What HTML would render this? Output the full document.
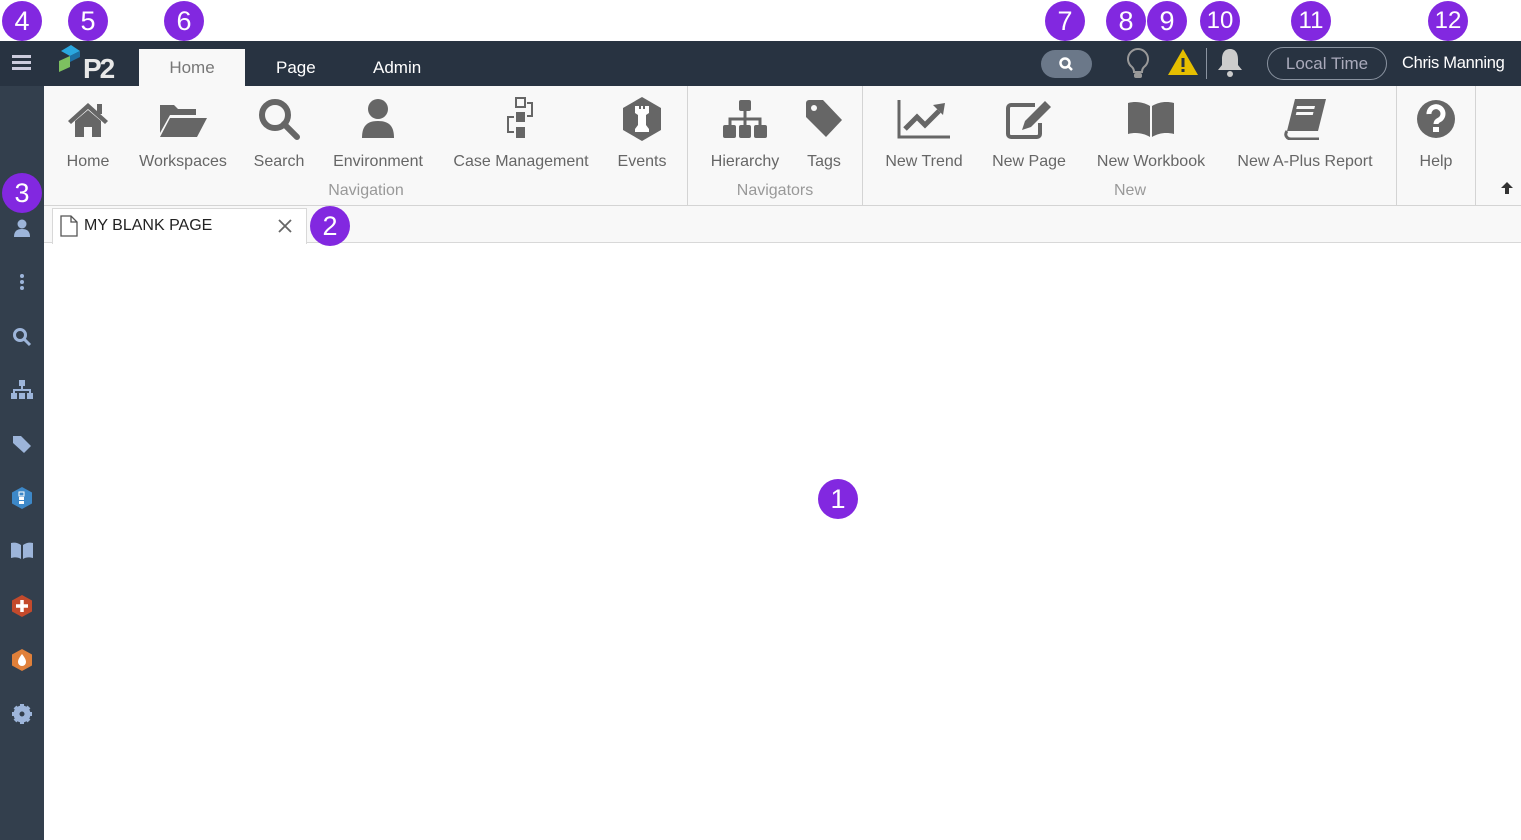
<!DOCTYPE html>
<html><head><meta charset="utf-8"><style>
*{margin:0;padding:0;box-sizing:border-box}
body{width:1521px;height:840px;position:relative;background:#fff;font-family:"Liberation Sans",sans-serif;overflow:hidden}
.a{position:absolute}
.top{left:0;top:41px;width:1521px;height:45px;background:#283341}
.side{left:0;top:86px;width:44px;height:754px;background:#333f4d}
.rib{left:44px;top:86px;width:1477px;height:120px;background:#f8f8f8;border-bottom:1px solid #d4d4d4}
.tabs{left:44px;top:206px;width:1477px;height:37px;background:#f8f8f8;border-bottom:1px solid #d8d8d8}
.lbl{font-size:16px;color:#666;transform:translateX(-50%);white-space:nowrap;top:153px}
.grp{font-size:16px;color:#999;transform:translateX(-50%);white-space:nowrap;top:182px}
.sep{top:86px;width:1px;height:119px;background:#d4d4d4}
.ic{transform:translate(-50%,-50%);top:119px}
.c{width:40px;height:40px;border-radius:50%;background:#8228e0;color:#fff;font-size:27px;text-align:center;line-height:40px;transform:translate(-50%,-50%)}
.si{left:22px;transform:translate(-50%,-50%)}
</style></head><body>
<div class="a top"></div>
<div class="a side"></div>
<div class="a" style="left:12px;top:55px;width:19px;height:3px;background:#ccd;box-shadow:0 6px 0 #ccd,0 12px 0 #ccd"></div>
<svg class="a" style="left:58px;top:44px" width="64" height="36" viewBox="0 0 64 36"><polygon points="3,7 13,1 22,7 12,12" fill="#2aa7df"/><polygon points="1,17 12,12 12,23 1,28" fill="#7dc060"/><polygon points="12,12 22,7 22,13 12,18" fill="#1d6fa3"/><text x="25" y="34" font-family="Liberation Sans" font-weight="bold" font-size="28" fill="#e8e8e8" letter-spacing="-2">P2</text></svg>
<div class="a" style="left:139px;top:49px;width:106px;height:37px;background:#f8f8f8;color:#777;font-size:17px;text-align:center;line-height:38px">Home</div>
<div class="a" style="left:276px;top:58px;color:#fff;font-size:17px">Page</div>
<div class="a" style="left:373px;top:58px;color:#fff;font-size:17px">Admin</div>
<div class="a" style="left:1041px;top:50px;width:51px;height:28px;border-radius:14px;background:#6b7889"></div>
<svg class="a" style="left:1058px;top:56px" width="16" height="16" viewBox="0 0 16 16"><circle cx="7" cy="7" r="4.5" fill="none" stroke="#fff" stroke-width="2.5"/><line x1="10" y1="10" x2="14" y2="14" stroke="#fff" stroke-width="2.5"/></svg>
<svg class="a" style="left:1126px;top:47px" width="24" height="34" viewBox="0 0 24 34"><path d="M12 2a10 10 0 0 0-6 18c1 1 2 3 2 5h8c0-2 1-4 2-5A10 10 0 0 0 12 2z" fill="none" stroke="#999" stroke-width="2"/><rect x="8" y="26" width="8" height="5" rx="2" fill="#999"/></svg>
<svg class="a" style="left:1167px;top:48px" width="32" height="28" viewBox="0 0 32 28"><polygon points="16,1 31,27 1,27" fill="#e6bf00"/><rect x="14.5" y="10" width="3" height="9" fill="#283341"/><rect x="14.5" y="21" width="3" height="3" fill="#283341"/></svg>
<div class="a" style="left:1206px;top:48px;width:1px;height:31px;background:#8a93a0"></div>
<svg class="a" style="left:1215px;top:46px" width="30" height="34" viewBox="0 0 30 34"><path d="M15 3c-6 0-8 5-8 10v6l-4 5h24l-4-5v-6c0-5-2-10-8-10z" fill="#ccc"/><circle cx="15" cy="28" r="3" fill="#ccc"/></svg>
<div class="a" style="left:1267px;top:47px;width:120px;height:33px;border:1px solid #8a93a0;border-radius:17px;color:#aab;font-size:17px;text-align:center;line-height:31px">Local Time</div>
<div class="a" style="left:1402px;top:54px;color:#fff;font-size:16.5px;letter-spacing:-0.3px">Chris Manning</div>

<div class="a rib"></div>
<div class="a sep" style="left:687px"></div><div class="a sep" style="left:862px"></div><div class="a sep" style="left:1396px"></div><div class="a sep" style="left:1475px"></div>
<svg class="a ic" style="left:88px" width="44" height="40" viewBox="0 0 44 40"><path d="M22 4L2 22l3 3L22 10l17 15 3-3z" fill="#666"/><rect x="31" y="5" width="5" height="10" fill="#666"/><path d="M9 22l13-11 13 11v16H26V28h-8v10H9z" fill="#666"/></svg>
<svg class="a ic" style="left:183px" width="50" height="40" viewBox="0 0 50 40"><path d="M2 6h14l4 4h18v6H12L2 34z" fill="#666"/><path d="M12 19h37l-10 19H2z" fill="#666"/></svg>
<svg class="a ic" style="left:279px" width="44" height="44" viewBox="0 0 44 44"><circle cx="18" cy="18" r="13" fill="none" stroke="#666" stroke-width="6"/><line x1="27" y1="27" x2="40" y2="40" stroke="#666" stroke-width="6" stroke-linecap="round"/></svg>
<svg class="a ic" style="left:378px" width="36" height="42" viewBox="0 0 36 42"><circle cx="18" cy="11" r="10" fill="#666"/><path d="M2 40c0-12 5-17 16-17s16 5 16 17z" fill="#666"/></svg>
<svg class="a ic" style="left:521px" width="36" height="44" viewBox="0 0 36 44"><rect x="13" y="1" width="9" height="9" fill="none" stroke="#666" stroke-width="2"/><rect x="13" y="15" width="9" height="10" fill="#666"/><rect x="13" y="30" width="9" height="11" fill="#666"/><path d="M24 6h5v13h-5M11 20H5v15h6" fill="none" stroke="#666" stroke-width="2"/></svg>
<svg class="a ic" style="left:642px" width="42" height="46" viewBox="0 0 42 46"><polygon points="21,1 40,12 40,34 21,45 2,34 2,12" fill="#666"/><path d="M14 10h4v3h2v-3h2v3h2v-3h4v7l-3 2v10l3 4v3H14v-3l3-4V19l-3-2z" fill="#fff"/></svg>
<svg class="a ic" style="left:745px" width="46" height="40" viewBox="0 0 46 40"><rect x="17" y="1" width="12" height="11" rx="2" fill="#666"/><path d="M23 12v8M8 26v-6h30v6M23 20v6" stroke="#666" stroke-width="3" fill="none"/><rect x="1" y="26" width="13" height="13" rx="2" fill="#666"/><rect x="17" y="26" width="12" height="13" rx="2" fill="#666"/><rect x="32" y="26" width="13" height="13" rx="2" fill="#666"/></svg>
<svg class="a ic" style="left:824px" width="40" height="40" viewBox="0 0 40 40"><path d="M2 4a3 3 0 0 1 3-3h14l19 20-16 17L2 18z" fill="#666"/><circle cx="10" cy="9" r="3" fill="#f8f8f8"/></svg>
<svg class="a ic" style="left:924px" width="54" height="40" viewBox="0 0 54 40"><path d="M2 1v37h51" stroke="#666" stroke-width="3" fill="none"/><path d="M8 30l12-12 8 8 14-14" stroke="#666" stroke-width="5" fill="none"/><polygon points="36,6 48,4 46,16" fill="#666"/></svg>
<svg class="a ic" style="left:1029px" width="48" height="40" viewBox="0 0 48 40"><path d="M30 6H6a3 3 0 0 0-3 3v26a3 3 0 0 0 3 3h26a3 3 0 0 0 3-3V24" stroke="#666" stroke-width="4" fill="none"/><path d="M40 2l6 6-20 20-9 3 3-9z" fill="#666"/></svg>
<svg class="a ic" style="left:1151px" width="48" height="38" viewBox="0 0 48 38"><path d="M1 3c8-2 15-1 22 3v31C16 33 9 32 1 34z" fill="#666"/><path d="M47 3c-8-2-15-1-22 3v31c7-4 14-5 22-3z" fill="#666"/></svg>
<svg class="a ic" style="left:1305px" width="44" height="42" viewBox="0 0 44 42"><path d="M12 1h31l-8 32H4z" fill="#666"/><path d="M4 33c-3 4 0 8 4 8h28" stroke="#666" stroke-width="3" fill="none"/><rect x="16" y="8" width="18" height="3" fill="#f8f8f8" transform="skewX(-14)"/><rect x="17" y="14" width="17" height="3" fill="#f8f8f8" transform="skewX(-14)"/></svg>
<svg class="a ic" style="left:1436px" width="40" height="40" viewBox="0 0 40 40"><circle cx="20" cy="20" r="19" fill="#666"/><path d="M13 15a7 7 0 1 1 10 6c-2 1-3 2-3 4" stroke="#fff" stroke-width="5" fill="none"/><rect x="17" y="28" width="6" height="5" fill="#fff"/></svg>
<svg class="a" style="left:1500px;top:181px" width="14" height="14" viewBox="0 0 14 14"><path d="M7 1L1 7h4v6h4V7h4z" fill="#333"/></svg>
<div class="a lbl" style="left:88px">Home</div>
<div class="a lbl" style="left:183px">Workspaces</div>
<div class="a lbl" style="left:279px">Search</div>
<div class="a lbl" style="left:378px">Environment</div>
<div class="a lbl" style="left:521px">Case Management</div>
<div class="a lbl" style="left:642px">Events</div>
<div class="a lbl" style="left:745px">Hierarchy</div>
<div class="a lbl" style="left:824px">Tags</div>
<div class="a lbl" style="left:924px">New Trend</div>
<div class="a lbl" style="left:1029px">New Page</div>
<div class="a lbl" style="left:1151px">New Workbook</div>
<div class="a lbl" style="left:1305px">New A-Plus Report</div>
<div class="a lbl" style="left:1436px">Help</div>
<div class="a grp" style="left:366px">Navigation</div>
<div class="a grp" style="left:775px">Navigators</div>
<div class="a grp" style="left:1130px">New</div>
<div class="a tabs"></div>
<div class="a" style="left:52px;top:208px;width:255px;height:36px;background:#fff;border:1px solid #d8d8d8;border-bottom:none"></div>
<svg class="a" style="left:60px;top:215px" width="18" height="22" viewBox="0 0 18 22"><path d="M1 1h10l6 6v14H1z M11 1v6h6" fill="none" stroke="#555" stroke-width="1.3"/></svg>
<div class="a" style="left:84px;top:217px;font-size:16px;color:#222">MY BLANK PAGE</div>
<svg class="a" style="left:278px;top:219px" width="14" height="14" viewBox="0 0 14 14"><path d="M1 1l12 12M13 1L1 13" stroke="#666" stroke-width="1.8"/></svg>
<svg class="a si" style="top:228px" width="18" height="18" viewBox="0 0 18 18"><circle cx="9" cy="5" r="4.5" fill="#9db5da"/><path d="M1 18c0-6 3-8 8-8s8 2 8 8z" fill="#9db5da"/></svg>
<div class="a si" style="top:282px;width:4px;height:4px;background:#9db5da;border-radius:50%;box-shadow:0 -6px 0 #9db5da,0 6px 0 #9db5da"></div>
<svg class="a si" style="top:337px" width="20" height="20" viewBox="0 0 20 20"><circle cx="8" cy="8" r="5.5" fill="none" stroke="#9db5da" stroke-width="3"/><line x1="12" y1="12" x2="18" y2="18" stroke="#9db5da" stroke-width="3"/></svg>
<svg class="a si" style="top:390px" width="24" height="20" viewBox="0 0 24 20"><rect x="9" y="0" width="6" height="6" fill="#9db5da"/><path d="M12 6v4M4 13v-3h16v3" stroke="#9db5da" stroke-width="2" fill="none"/><rect x="1" y="13" width="6" height="6" fill="#9db5da"/><rect x="9" y="13" width="6" height="6" fill="#9db5da"/><rect x="17" y="13" width="6" height="6" fill="#9db5da"/></svg>
<svg class="a si" style="top:444px" width="20" height="20" viewBox="0 0 20 20"><path d="M1 2h8l10 10-7 7L1 9z" fill="#9db5da"/></svg>
<svg class="a si" style="top:498px" width="22" height="24" viewBox="0 0 22 24"><polygon points="11,1 21,6.5 21,17.5 11,23 1,17.5 1,6.5" fill="#3d88c8"/><rect x="8" y="6" width="5" height="4" fill="none" stroke="#fff"/><rect x="8" y="11" width="5" height="3" fill="#fff"/><rect x="8" y="15" width="5" height="3" fill="#fff"/></svg>
<svg class="a si" style="top:551px" width="24" height="18" viewBox="0 0 24 18"><path d="M1 1c4-1 7 0 10 2v14c-3-2-6-2-10-1z M23 1c-4-1-7 0-10 2v14c3-2 6-2 10-1z" fill="#9db5da"/></svg>
<svg class="a si" style="top:606px" width="22" height="24" viewBox="0 0 22 24"><polygon points="11,1 21,6.5 21,17.5 11,23 1,17.5 1,6.5" fill="#c34a2c"/><path d="M11 6v12M5 12h12" stroke="#fff" stroke-width="3.5"/></svg>
<svg class="a si" style="top:660px" width="22" height="24" viewBox="0 0 22 24"><polygon points="11,1 21,6.5 21,17.5 11,23 1,17.5 1,6.5" fill="#e0803a"/><path d="M11 6c-3 4-4 6-4 8a4 4 0 0 0 8 0c0-2-1-4-4-8z" fill="#fff"/></svg>
<svg class="a si" style="top:714px" width="20" height="20" viewBox="0 0 20 20"><circle cx="10" cy="10" r="6.5" fill="none" stroke="#9db5da" stroke-width="4"/><g stroke="#9db5da" stroke-width="4"><line x1="10" y1="0" x2="10" y2="20"/><line x1="0" y1="10" x2="20" y2="10"/><line x1="3" y1="3" x2="17" y2="17"/><line x1="17" y1="3" x2="3" y2="17"/></g><circle cx="10" cy="10" r="2.5" fill="#333f4d"/></svg>
<div class="a c" style="left:22px;top:21px">4</div>
<div class="a c" style="left:88px;top:21px">5</div>
<div class="a c" style="left:184px;top:21px">6</div>
<div class="a c" style="left:1065px;top:21px">7</div>
<div class="a c" style="left:1126px;top:21px">8</div>
<div class="a c" style="left:1167px;top:21px">9</div>
<div class="a c" style="left:1220px;top:21px;font-size:24px">10</div>
<div class="a c" style="left:1311px;top:21px;font-size:24px">11</div>
<div class="a c" style="left:1448px;top:21px;font-size:24px">12</div>
<div class="a c" style="left:22px;top:193px">3</div>
<div class="a c" style="left:330px;top:226px">2</div>
<div class="a c" style="left:838px;top:499px">1</div>
</body></html>
